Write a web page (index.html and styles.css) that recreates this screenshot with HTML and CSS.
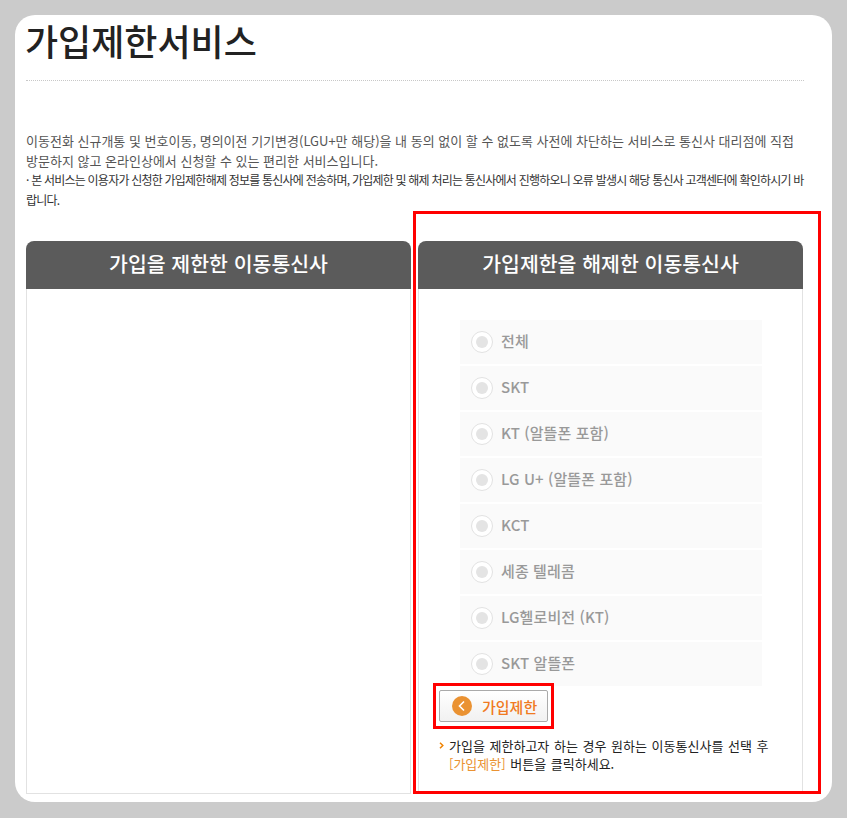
FILE: index.html
```html
<!DOCTYPE html>
<html lang="ko">
<head>
<meta charset="utf-8">
<title>가입제한서비스</title>
<link rel="stylesheet" href="styles.css">
</head>
<body>
<main class="card">
  <h1 class="title">가입제한서비스</h1>
  <div class="intro">
    <p class="desc">이동전화 신규개통 및 번호이동, 명의이전 기기변경(LGU+만 해당)을 내 동의 없이 할 수 없도록 사전에 차단하는 서비스로 통신사 대리점에 직접 방문하지 않고 온라인상에서 신청할 수 있는 편리한 서비스입니다.</p>
    <p class="notice">· 본 서비스는 이용자가 신청한 가입제한해제 정보를 통신사에 전송하며, 가입제한 및 해제 처리는 통신사에서 진행하오니 오류 발생시 해당 통신사 고객센터에 확인하시기 바랍니다.</p>
  </div>
  <div class="panels">
    <section class="panel">
      <h2 class="panel-head">가입을 제한한 이동통신사</h2>
      <div class="panel-body"></div>
    </section>
    <section class="panel">
      <h2 class="panel-head">가입제한을 해제한 이동통신사</h2>
      <div class="panel-body">
        <ul class="carriers">
          <li class="carrier"><span class="radio"></span><span class="carrier-name">전체</span></li>
          <li class="carrier"><span class="radio"></span><span class="carrier-name">SKT</span></li>
          <li class="carrier"><span class="radio"></span><span class="carrier-name">KT (알뜰폰 포함)</span></li>
          <li class="carrier"><span class="radio"></span><span class="carrier-name">LG U+ (알뜰폰 포함)</span></li>
          <li class="carrier"><span class="radio"></span><span class="carrier-name">KCT</span></li>
          <li class="carrier"><span class="radio"></span><span class="carrier-name">세종 텔레콤</span></li>
          <li class="carrier"><span class="radio"></span><span class="carrier-name">LG헬로비전 (KT)</span></li>
          <li class="carrier"><span class="radio"></span><span class="carrier-name">SKT 알뜰폰</span></li>
        </ul>
        <button class="action" type="button">
          <svg class="action-icon" width="20" height="20" viewBox="0 0 20 20" aria-hidden="true"><circle cx="10" cy="10" r="10" fill="#ea9232"/><path d="M12 5.5 7.5 10l4.5 4.5" fill="none" stroke="#fff" stroke-width="1.6"/></svg>
          <span>가입제한</span>
        </button>
        <div class="hint">
          <svg class="hint-icon" width="5" height="7" viewBox="0 0 5 7" aria-hidden="true"><path d="M1 .8 3.8 3.5 1 6.2" fill="none" stroke="#f08300" stroke-width="1.5"/></svg>
          <p>가입을 제한하고자 하는 경우 원하는 이동통신사를 선택 후 <span class="hint-em">[가입제한]</span> 버튼을 클릭하세요.</p>
        </div>
      </div>
    </section>
  </div>
  <div class="mark mark-panel"></div>
  <div class="mark mark-button"></div>
</main>
</body>
</html>
```
FILE: styles.css
```css
* { box-sizing: border-box; }
html { background: #cbcbcb; }
body {
  margin: 0;
  padding: 15px;
  height: 818px;
  overflow: hidden;
  background: #cbcbcb;
  font-family: "Noto Sans CJK KR", "Noto Sans", sans-serif;
}
.card {
  position: relative;
  width: 817px;
  height: 787px;
  padding: 0 28px 0 11px;
  background: #fff;
  border-radius: 20px;
}
.title {
  margin: 0;
  height: 66px;
  border-bottom: 1px dotted #c8c8c8;
  font-size: 36px;
  line-height: 51px;
  font-weight: 500;
  color: #222;
  text-indent: -1px;
}
.intro { padding-top: 50px; font-size: 13px; line-height: 19.6px; }
.desc { margin: 0; color: #555; font-weight: 400; }
.notice { margin: 0; color: #333; font-size: 12px; font-weight: 400; letter-spacing: -0.78px; }
.panels { display: flex; gap: 7px; margin-top: 32px; margin-right: -1px; }
.panel { width: 385px; display: flex; flex-direction: column; }
.panel-head {
  margin: 0;
  height: 48px;
  background: #5b5b5b;
  border-radius: 8px 8px 0 0;
  color: #fff;
  font-size: 20.5px;
  font-weight: 500;
  line-height: 45px;
  text-align: center;
}
.panel-body {
  height: 505px;
  padding: 31px 20px 0;
  border: 1px solid #e2e2e2;
  border-top: 0;
}
.carriers {
  display: flex;
  flex-direction: column;
  gap: 2px;
  margin: 0 20px 0 21px;
  padding: 0;
  list-style: none;
}
.carrier {
  display: flex;
  align-items: center;
  gap: 8px;
  height: 44px;
  padding-left: 11px;
  background: #fafafa;
  color: #999;
  font-size: 15px;
  font-weight: 500;
}
.carrier-name { margin-bottom: 3px; letter-spacing: 0.1px; }
.radio {
  width: 22px;
  height: 22px;
  border: 1px solid #e2e2e2;
  border-radius: 50%;
  background: #fff;
  position: relative;
}
.radio::after {
  content: "";
  position: absolute;
  inset: 4px;
  border-radius: 50%;
  background: #e4e4e4;
}
.action {
  display: flex;
  align-items: center;
  gap: 10px;
  width: 109px;
  height: 32px;
  margin-top: 4px;
  padding: 0 0 0 12px;
  border: 1px solid #aaa;
  border-radius: 2px;
  background: linear-gradient(#fff, #f1f1f1);
  color: #f07a22;
  font-family: inherit;
  font-size: 15px;
  font-weight: 500;
}
.hint {
  display: flex;
  align-items: flex-start;
  gap: 5px;
  margin-top: 15px;
  font-size: 13px;
  word-spacing: 1px;
  line-height: 18px;
  color: #222;
}
.hint p { margin: 0; width: 322px; }
.hint-icon { flex: none; margin-top: 5px; }
.hint-em { color: #ea9232; }
.mark { position: absolute; border: 3px solid #f00; pointer-events: none; }
.mark-panel { left: 398px; top: 196px; width: 408px; height: 583px; }
.mark-button { left: 418px; top: 668px; width: 121px; height: 46px; }
```
